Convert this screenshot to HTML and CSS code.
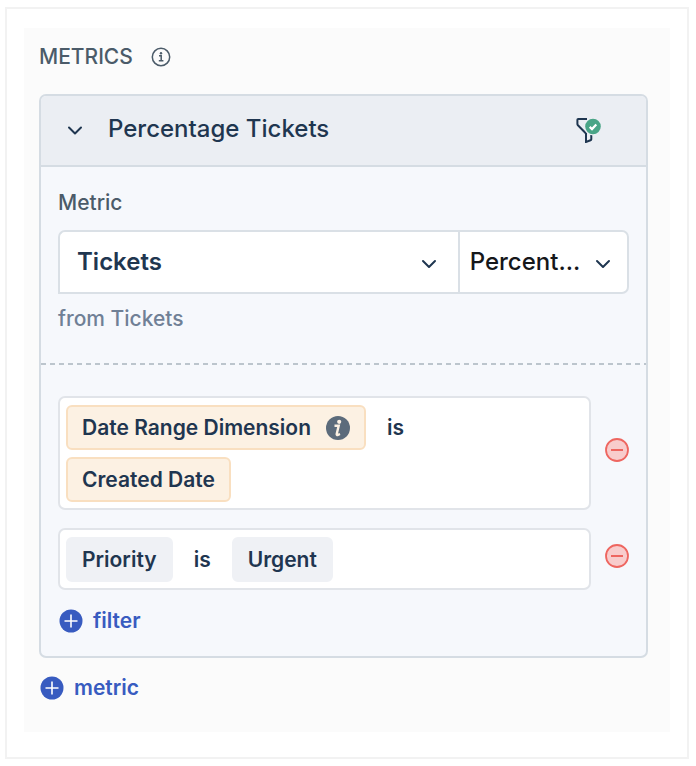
FILE: index.html
```
<!DOCTYPE html>
<html lang="en">
<head>
  <meta charset="UTF-8">
  <meta name="viewport" content="width=device-width, initial-scale=1.0">
  <title>Metrics</title>
  <link rel="stylesheet" href="styles.css">
</head>
<body>
  <main class="frame">
    <section class="panel">
      <div class="panel-title">
        <h2>METRICS</h2>
        <svg class="info" width="20" height="20" viewBox="0 0 20 20" fill="none" stroke="#4b5b69">
          <circle cx="10" cy="10" r="8.7" stroke-width="1.5"/>
          <path d="M8 8.800h2.200v4.800M7.800 13.800h4.600" stroke-width="1.5"/>
          <circle cx="10" cy="6.200" r="1.200" fill="#4b5b69" stroke="none"/>
        </svg>
      </div>

      <div class="card">
        <header class="card-header">
          <button class="icon-button" type="button" aria-label="Collapse metric">
            <svg width="16" height="16" viewBox="0 0 16 16" fill="none" stroke="#1f3650" stroke-width="2" stroke-linecap="round" stroke-linejoin="round"><path d="M2 6.500l6 6 6-6"/></svg>
          </button>
          <h3>Percentage Tickets</h3>
          <button class="icon-button filter-button" type="button" aria-label="Filters applied">
            <svg width="28" height="28" viewBox="0 0 28 28" fill="none">
              <path d="M12 4H3.200C2.700 4 2.400 4.300 2.400 4.800V9c0 .5.100.8.5 1.200L11 18.500V27l4.500-1.800c.5-.2.800-.5.800-1V20" stroke="#1f3650" stroke-width="2"/>
              <circle cx="18" cy="11.500" r="9" fill="#ebeef3"/>
              <circle cx="18" cy="11.500" r="7.800" fill="#4aa587"/>
              <path d="M14.700 11.900l2.300 2.200 4.300-4.700" stroke="#fff" stroke-width="2.200"/>
            </svg>
          </button>
        </header>

        <div class="metric">
          <label for="metric">Metric</label>
          <div class="metric-row">
            <div class="select metric-select">
              <select id="metric"><option>Tickets</option></select>
              <svg width="16" height="16" viewBox="0 0 16 16" fill="none" stroke="#1f3650" stroke-width="2" stroke-linecap="round" stroke-linejoin="round"><path d="M2 5l6 6 6-6"/></svg>
            </div>
            <div class="select type-select">
              <select aria-label="Aggregation"><option>Percent...</option></select>
              <svg width="16" height="16" viewBox="0 0 16 16" fill="none" stroke="#1f3650" stroke-width="2" stroke-linecap="round" stroke-linejoin="round"><path d="M2 5l6 6 6-6"/></svg>
            </div>
          </div>
          <p class="source">from Tickets</p>
        </div>

        <div class="filters">
          <div class="filter">
            <div class="filter-box">
              <span class="chip date">Date Range Dimension
                <svg width="24" height="24" viewBox="0 0 24 24">
                  <circle cx="12" cy="12" r="12" fill="#5c6b7b"/>
                  <circle cx="13.200" cy="5.800" r="2.100" fill="#fcf1e3"/>
                  <path d="M8.500 9.700h4.200l-2 8.300c-.2.900.4 1.100 1.300.8l2-.8" fill="none" stroke="#fcf1e3" stroke-width="2.400"/>
                </svg>
              </span>
              <span class="operator">is</span>
              <span class="chip date">Created Date</span>
            </div>
            <button class="icon-button remove" type="button" aria-label="Remove date filter">
              <svg width="24" height="24" viewBox="0 0 24 24" stroke="#ee6660"><circle cx="12" cy="12" r="11" fill="#f8cccc" stroke-width="1.800"/><path d="M6 12h12" stroke-width="2"/></svg>
            </button>
          </div>
          <div class="filter">
            <div class="filter-box">
              <span class="chip">Priority</span>
              <span class="operator">is</span>
              <span class="chip">Urgent</span>
            </div>
            <button class="icon-button remove" type="button" aria-label="Remove priority filter">
              <svg width="24" height="24" viewBox="0 0 24 24" stroke="#ee6660"><circle cx="12" cy="12" r="11" fill="#f8cccc" stroke-width="1.800"/><path d="M6 12h12" stroke-width="2"/></svg>
            </button>
          </div>
          <button class="add" type="button">
            <svg width="24" height="24" viewBox="0 0 24 24"><circle cx="12" cy="12" r="11.500" fill="#385bc0"/><path d="M12 5.500v13M5.500 12h13" stroke="#fff" stroke-width="1.600"/></svg>
            filter
          </button>
        </div>
      </div>

      <button class="add" type="button">
        <svg width="24" height="24" viewBox="0 0 24 24"><circle cx="12" cy="12" r="11.500" fill="#385bc0"/><path d="M12 5.500v13M5.500 12h13" stroke="#fff" stroke-width="1.600"/></svg>
        metric
      </button>
    </section>
  </main>
</body>
</html>
```

FILE: styles.css
```
* {
  box-sizing: border-box;
}
body {
  margin: 0;
  padding: 7px 7px 7px 5px;
  background: #fff;
  color: #1f3650;
  font-family: Inter, "Liberation Sans", sans-serif;
  font-size: 21px;
  font-weight: 500;
  line-height: 30px;
}
h2, h3, p {
  margin: 0;
  font-weight: 500;
}
button, select {
  font: inherit;
  color: inherit;
}
svg {
  display: block;
  flex: none;
}
.frame {
  border: 2px solid #f2f2f2;
  padding: 19px 17px 25px;
}
.panel {
  background: #fbfbfb;
  padding: 14px 22px 29px 15px;
}
.panel-title {
  display: flex;
  align-items: center;
  gap: 18px;
  margin-bottom: 22px;
  color: #4b5b69;
}
.panel-title h2 {
  font-size: 21px;
}
.card {
  border: 2px solid #d5dce3;
  border-radius: 7px;
  background: #f6f8fc;
  margin-bottom: 15px;
  overflow: hidden;
}
.card-header {
  display: flex;
  align-items: center;
  height: 71px;
  padding: 0 43px 3px 26px;
  background: #ebeef3;
  border-bottom: 2px solid #d5dce3;
}
.card-header h3 {
  margin-left: 25px;
  font-size: 24px;
}
.icon-button {
  padding: 0;
  border: 0;
  background: none;
  cursor: pointer;
}
.filter-button {
  margin-left: auto;
}
.metric {
  padding: 21px 17px 29px;
}
.metric label {
  display: block;
  margin-bottom: 12px;
  color: #4b5b69;
}
.metric-row {
  display: flex;
}
.select {
  position: relative;
}
.select select {
  display: block;
  width: 100%;
  height: 64px;
  padding: 0 36px 0 17px;
  border: 2px solid #dae0e6;
  background: #fff;
  font-size: 24px;
  appearance: none;
}
.select svg {
  position: absolute;
  top: 26px;
  right: 18px;
  pointer-events: none;
}
.metric-select {
  flex: 7;
}
.metric-select select {
  border-right: 0;
  border-radius: 7px 0 0 0;
  font-weight: 600;
}
.metric-select svg {
  right: 21px;
}
.type-select {
  flex: 3;
}
.type-select select {
  padding-left: 10px;
  border-radius: 0 7px 7px 0;
  color: #15171a;
}
.source {
  margin-top: 10px;
  color: #708096;
}
.filters {
  padding: 33px 17px 20px;
  background: repeating-linear-gradient(90deg, #bcc5cd 0 5px, transparent 5px 9px) top / 100% 2px no-repeat;
}
.filter {
  display: flex;
  align-items: center;
  gap: 14px;
  margin-bottom: 18px;
}
.filter:nth-child(2) {
  margin-bottom: 16px;
}
.filter-box {
  flex: 1;
  display: flex;
  flex-wrap: wrap;
  align-items: center;
  gap: 7px 5px;
  padding: 7px 6px 6px;
  border: 2px solid #e1e4e9;
  border-radius: 7px;
  background: #fff;
}
.chip {
  display: flex;
  align-items: center;
  gap: 15px;
  height: 45px;
  padding: 0 14px;
  border: 2px solid #eff1f5;
  border-radius: 6px;
  background: #eff1f5;
  font-weight: 600;
}
.chip.date {
  border-color: #f9dfc0;
  background: #fcf1e3;
}
.operator {
  padding: 0 16px;
  font-weight: 600;
}
.remove {
  padding-bottom: 6px;
}
.add {
  display: flex;
  align-items: center;
  gap: 10px;
  padding: 0 1px;
  border: 0;
  background: none;
  color: #385bc0;
  font-weight: 600;
  cursor: pointer;
}
```
